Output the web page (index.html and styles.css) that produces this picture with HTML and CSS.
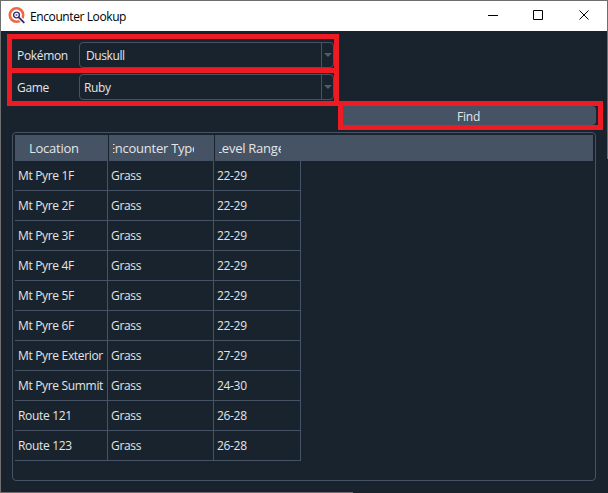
FILE: index.html
```
<!DOCTYPE html>
<html lang="en">
<head>
<meta charset="utf-8">
<title>Encounter Lookup</title>
<link rel="stylesheet" href="styles.css">
</head>
<body>
<div class="window">
  <header class="titlebar">
    <svg class="logo" width="18" height="18" viewBox="0 0 18 18">
      <circle cx="8.5" cy="8" r="6.7" fill="#fff" stroke="#f0683c" stroke-width="2.6"/>
      <circle cx="8.5" cy="8" r="2.9" fill="#fff" stroke="#342d75" stroke-width="1.4"/>
      <circle cx="8.5" cy="8" r="1.1" fill="#77719f"/>
      <path d="M11.5 11L16 15.3" stroke="#fff" stroke-width="4"/>
      <path d="M10.8 10.3L15.8 15.4" stroke="#342d75" stroke-width="1.9" stroke-linecap="round"/>
    </svg>
    <h1 class="title">Encounter Lookup</h1>
    <svg class="controls" width="104" height="12" viewBox="0 0 104 12" fill="none" stroke="#000">
      <path d="M0 5.5H10M45.5 .5H54.5V9.5H45.5ZM91.5 .5L100.5 9.5M100.5 .5L91.5 9.5"/>
    </svg>
  </header>
  <main class="content">
    <section class="fields">
      <div class="field"><label>Pokémon</label><div class="combo editable"><span class="value">Duskull</span><span class="drop"><svg width="8" height="4"><path d="M0 0H8L4 4Z" fill="#4d5d70"/></svg></span></div></div>
      <div class="field"><label>Game</label><div class="combo"><span class="value">Ruby</span><span class="drop"><svg width="8" height="4"><path d="M0 0H8L4 4Z" fill="#4d5d70"/></svg></span></div></div>
    </section>
    <section class="action"><button class="find">Find</button></section>
    <section class="table-frame">
      <div class="head"><div class="th location"><span>Location</span></div><div class="th type"><span>Encounter Type</span></div><div class="th level"><span>Level Range</span></div></div>
      <div class="grid">
        <div>Mt Pyre 1F</div><div>Grass</div><div>22-29</div>
        <div>Mt Pyre 2F</div><div>Grass</div><div>22-29</div>
        <div>Mt Pyre 3F</div><div>Grass</div><div>22-29</div>
        <div>Mt Pyre 4F</div><div>Grass</div><div>22-29</div>
        <div>Mt Pyre 5F</div><div>Grass</div><div>22-29</div>
        <div>Mt Pyre 6F</div><div>Grass</div><div>22-29</div>
        <div>Mt Pyre Exterior</div><div>Grass</div><div>27-29</div>
        <div>Mt Pyre Summit</div><div>Grass</div><div>24-30</div>
        <div>Route 121</div><div>Grass</div><div>26-28</div>
        <div>Route 123</div><div>Grass</div><div>26-28</div>
      </div>
    </section>
  </main>
</div>
</body>
</html>
```
FILE: styles.css
```
* { box-sizing: border-box; }
body { margin: 0; background: #19232d; overflow: hidden; }
.window {
  position: relative;
  width: 608px; height: 493px;
  border-left: 1px solid #6f6f6f;
  border-top: 1px solid #6f6f6f;
  background: #19232d;
  color: #e3e5e7;
  font: 12px/16px "Open Sans", "Noto Sans", sans-serif;
  letter-spacing: -0.33px;
}
.window::before { content: ""; position: absolute; right: 0; top: 0; width: 1px; height: 158px; background: #6f6f6f; }
.window::after { content: ""; position: absolute; left: 0; bottom: 0; width: 352px; height: 1px; background: #6f6f6f; }
.titlebar { display: flex; align-items: center; height: 30px; padding-left: 7px; background: #fff; color: #000; }
.logo { flex: none; margin-top: -1px; }
.title { margin: 1px 0 0 4px; font-size: 12px; font-weight: 400; flex: 1; letter-spacing: -0.4px; }
.controls { flex: none; margin-right: 16px; }
.content { padding: 3px 4px 0 6px; }
.fields { width: 332px; height: 72px; border: 5px solid #ed1c24; }
.field { display: flex; align-items: flex-start; height: 29px; padding: 3px 0 0 5px; }
.field + .field { border-top: 5px solid #ed1c24; height: 33px; padding-top: 1px; }
label { width: 62px; padding-top: 6px; }
.combo { display: flex; flex: 1; height: 26px; border: 1px solid #455364; border-radius: 4px; }
.value { flex: 1; padding: 5px 0 0 4px; }
.editable .value { padding-left: 6px; letter-spacing: -0.4px; }
.drop { display: flex; align-items: center; justify-content: center; width: 12px; border-left: 1px solid #455364; }
.action { width: 265px; height: 29px; margin: -5px 0 0 331px; padding-right: 2px; border: 5px solid #ed1c24; }
.find { display: block; width: 100%; height: 19px; padding: 2px 2px 0 0; border: 0; border-radius: 0 4px 4px 0; background: #455364; color: #e3e5e7; font: inherit; letter-spacing: -0.2px; line-height: 17px; }
.table-frame { width: 584px; height: 349px; margin: 2px 0 0 5px; padding: 2px; border: 1px solid #455364; border-radius: 4px; }
.head { display: flex; height: 26px; background: #455364; font-size: 13px; line-height: 27px; white-space: nowrap; letter-spacing: -0.25px; }
.th { border-right: 1px solid #19232d; overflow: hidden; }
.location { width: 94px; padding-left: 14px; }
.type { width: 106px; padding-left: 4px; }
.level { width: 86px; padding-left: 4px; border: 0; }
.type span, .level span { display: flex; justify-content: center; overflow: hidden; }
.type span { width: 81px; }
.level span { width: 62px; }
.grid { display: grid; grid-template-columns: 93px 106px 87px; grid-auto-rows: 30px; width: 286px; }
.grid div { padding: 0 0 0 3px; border-right: 1px solid #455364; border-bottom: 1px solid #455364; line-height: 29px; white-space: nowrap; }
```
